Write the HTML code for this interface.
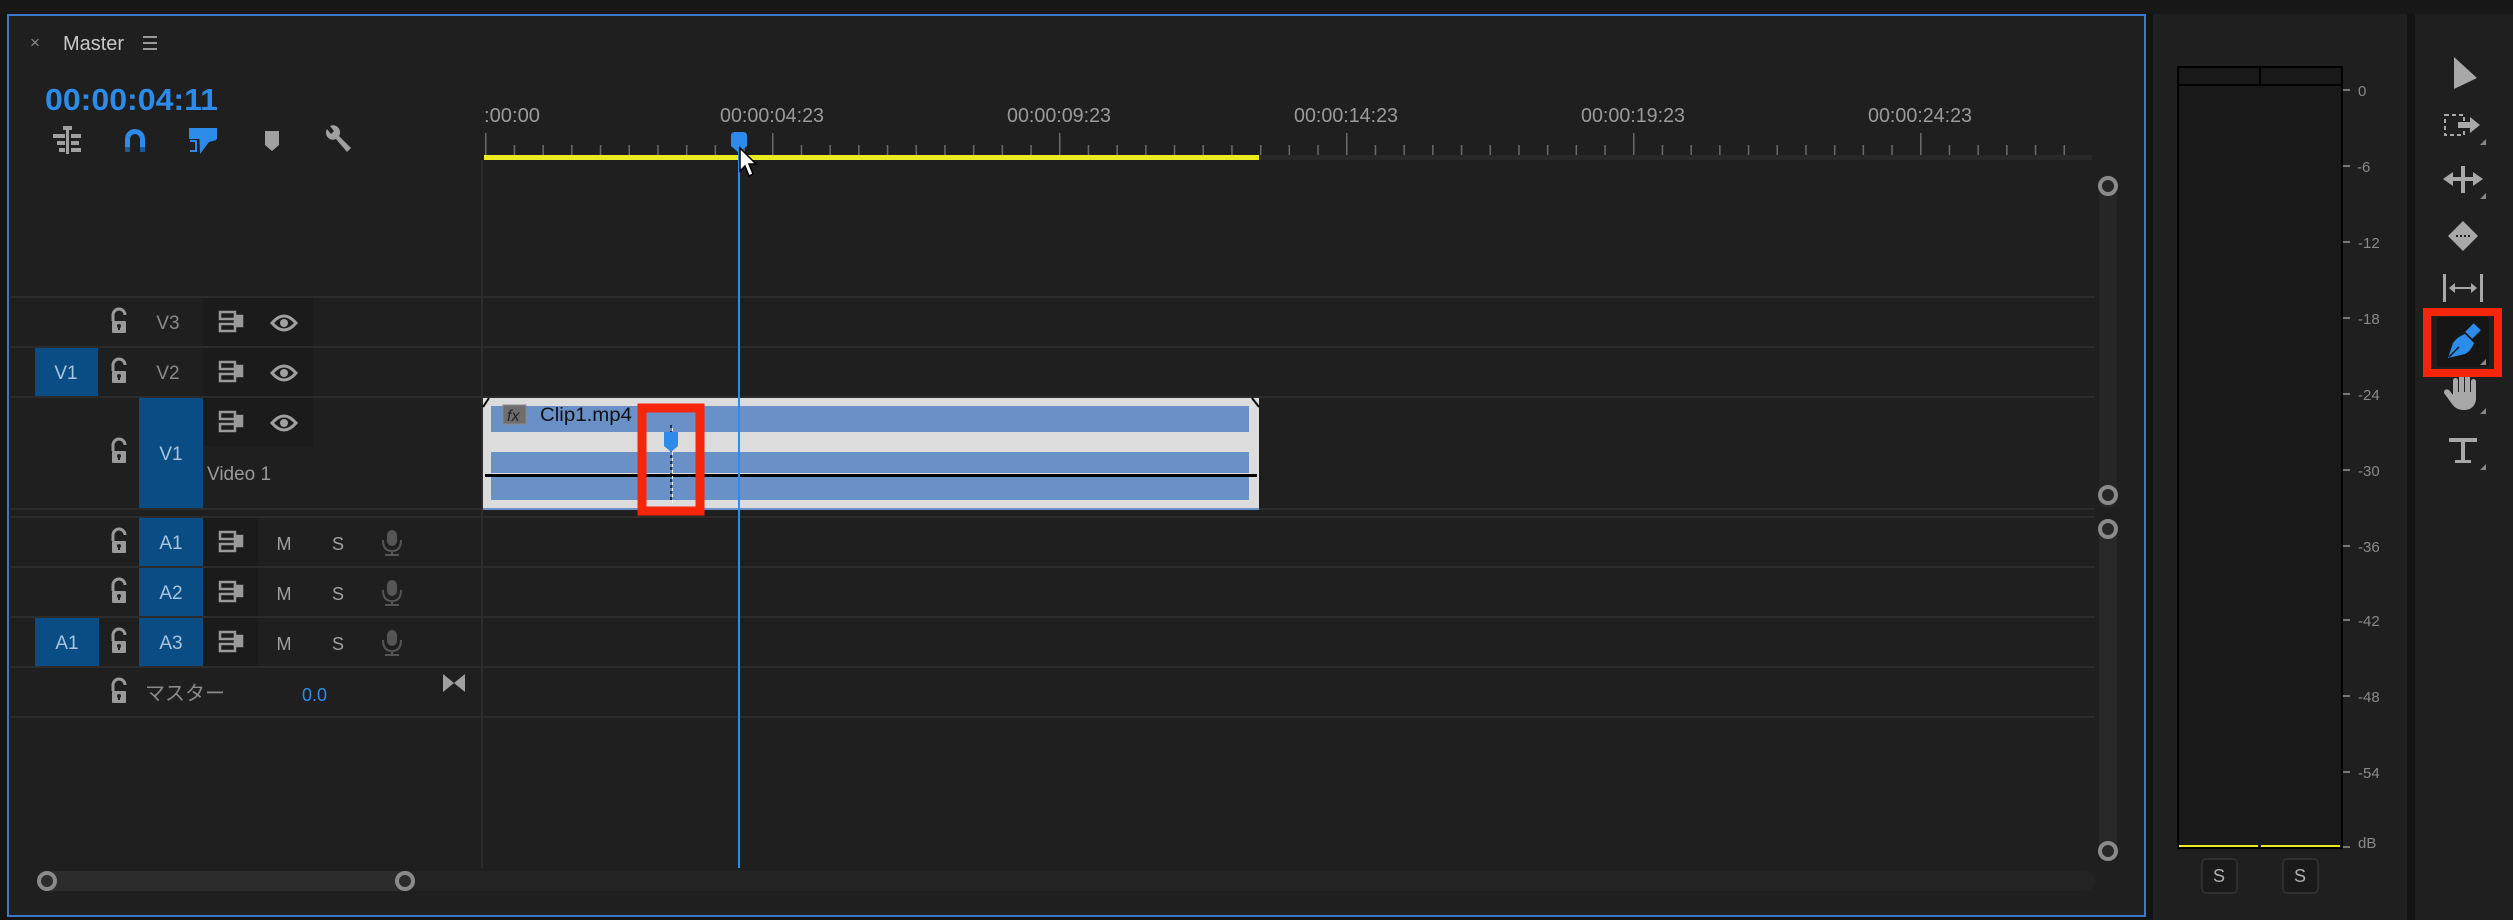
<!DOCTYPE html>
<html><head><meta charset="utf-8"><style>
html,body{margin:0;padding:0;background:#141414;width:2513px;height:920px;overflow:hidden}
svg{display:block}
text{font-family:"Liberation Sans","Noto Sans CJK JP",sans-serif}
</style></head><body>
<svg width="2513" height="920" viewBox="0 0 2513 920" xmlns="http://www.w3.org/2000/svg">
<defs>
<pattern id="ticks" x="485" y="0" width="28.7" height="920" patternUnits="userSpaceOnUse">
<rect x="0" y="145" width="1.5" height="10" fill="#6a6a6a"/>
</pattern>
<g id="lock"><path d="M-6 -2 V-8 A6 6 0 0 1 6 -8" fill="none" stroke="#9a9a9a" stroke-width="3"/><rect x="-7" y="-2" width="14" height="12" rx="1" fill="#9a9a9a"/><circle cx="0" cy="3" r="2" fill="#222"/><rect x="-1" y="3" width="2" height="4" fill="#222"/></g>
<g id="tog" fill="none" stroke="#9a9a9a" stroke-width="2.5"><rect x="-11" y="-10" width="15" height="7"/><rect x="-11" y="2" width="15" height="7"/><rect x="4" y="-6" width="7" height="10" fill="#9a9a9a"/></g>
<g id="eye"><path d="M-12 0 Q0 -14 12 0 Q0 14 -12 0Z" fill="none" stroke="#a0a0a0" stroke-width="3"/><circle cx="0" cy="0" r="4" fill="#a0a0a0"/></g>
<g id="mic" fill="#555"><rect x="-5" y="-12" width="10" height="16" rx="5"/><path d="M-9 -2 Q-9 9 0 9 Q9 9 9 -2" fill="none" stroke="#555" stroke-width="2"/><rect x="-1" y="9" width="2" height="4"/><rect x="-7" y="12" width="14" height="2"/></g>
</defs>

<rect x="0" y="0" width="2513" height="14" fill="#171717"/>
<rect x="8" y="15" width="2137" height="901" fill="#1f1f1f" stroke="#3d78c8" stroke-width="2"/>

<text x="30" y="48" font-size="17" fill="#8a8a8a">×</text>
<text x="63" y="50" font-size="20" fill="#c8c8c8" textLength="61" lengthAdjust="spacingAndGlyphs">Master</text>
<g fill="#9a9a9a"><rect x="143" y="36" width="14" height="2"/><rect x="143" y="42" width="14" height="2"/><rect x="143" y="48" width="14" height="2"/></g>
<text x="45" y="110" font-size="31" font-weight="bold" fill="#2d8ceb" textLength="173" lengthAdjust="spacingAndGlyphs">00:00:04:11</text>

<g fill="#a0a0a0">
<rect x="66" y="126" width="3" height="28"/><rect x="63" y="126" width="9" height="4"/>
<rect x="53" y="134" width="12" height="4"/><rect x="71" y="134" width="10" height="4"/>
<rect x="57" y="141" width="8" height="4"/><rect x="71" y="141" width="8" height="4"/>
<rect x="59" y="148" width="6" height="4"/><rect x="71" y="148" width="10" height="4"/>
</g>
<path d="M125 152 V139 A10 10 0 0 1 145 139 V152 H140 V139 A5 5 0 0 0 130 139 V152Z" fill="#2d8ceb"/>
<rect x="125" y="147" width="5" height="5" fill="#1a5a9a"/><rect x="140" y="147" width="5" height="5" fill="#1a5a9a"/>
<rect x="189" y="128" width="28" height="11" fill="#2d8ceb"/>
<path d="M199 128 L217 140 L209 142 L200 154Z" fill="#2d8ceb"/>
<path d="M190 141 H196 V151 H190" fill="none" stroke="#2d8ceb" stroke-width="2"/>
<path d="M265 131 H279 V145 L272 151 L265 145Z" fill="#a0a0a0"/>
<path d="M327 129 A7 7 0 0 0 336 139 L347 152 L351 148 L339 136 A7 7 0 0 0 330 126 L334 131 L331 134Z" fill="#a0a0a0"/>

<text x="484" y="122" font-size="20" fill="#9a9a9a" textLength="56" lengthAdjust="spacingAndGlyphs">:00:00</text>
<g font-size="20" fill="#9a9a9a" text-anchor="middle">
<text x="772" y="122" textLength="104" lengthAdjust="spacingAndGlyphs">00:00:04:23</text>
<text x="1059" y="122" textLength="104" lengthAdjust="spacingAndGlyphs">00:00:09:23</text>
<text x="1346" y="122" textLength="104" lengthAdjust="spacingAndGlyphs">00:00:14:23</text>
<text x="1633" y="122" textLength="104" lengthAdjust="spacingAndGlyphs">00:00:19:23</text>
<text x="1920" y="122" textLength="104" lengthAdjust="spacingAndGlyphs">00:00:24:23</text>
</g>
<rect x="484" y="140" width="1608" height="16" fill="url(#ticks)"/>
<g fill="#6a6a6a"><rect x="485" y="133" width="1.5" height="22"/><rect x="772" y="133" width="1.5" height="22"/><rect x="1059" y="133" width="1.5" height="22"/><rect x="1346" y="133" width="1.5" height="22"/><rect x="1633" y="133" width="1.5" height="22"/><rect x="1920" y="133" width="1.5" height="22"/></g>
<rect x="484" y="155" width="1608" height="5" fill="#282828"/>
<rect x="484" y="155" width="775" height="5" fill="#eaea1e"/>

<g fill="#2c2c2c">
<rect x="10" y="296" width="2085" height="2"/>
<rect x="10" y="346" width="2085" height="2"/>
<rect x="10" y="396" width="2085" height="2"/>
<rect x="10" y="508" width="2085" height="2"/>
<rect x="10" y="516" width="2085" height="2"/>
<rect x="10" y="566" width="2085" height="2"/>
<rect x="10" y="616" width="2085" height="2"/>
<rect x="10" y="666" width="2085" height="2"/>
<rect x="10" y="716" width="2085" height="2"/>
<rect x="481" y="160" width="2" height="708"/>
</g>
<g fill="#1b1b1b">
<rect x="203" y="298" width="110" height="48"/><rect x="203" y="348" width="110" height="48"/><rect x="203" y="398" width="110" height="48"/>
<rect x="203" y="518" width="55" height="48"/><rect x="203" y="568" width="55" height="48"/><rect x="203" y="618" width="55" height="48"/>
</g>

<g fill="#0a4d84">
<rect x="35" y="348" width="63" height="48"/>
<rect x="139" y="398" width="64" height="110"/>
<rect x="139" y="518" width="64" height="48"/>
<rect x="139" y="568" width="64" height="48"/>
<rect x="139" y="618" width="64" height="48"/>
<rect x="35" y="618" width="64" height="48"/>
</g>
<g font-size="19" fill="#a8c4e0" text-anchor="middle">
<text x="66" y="379">V1</text><text x="171" y="460">V1</text>
<text x="171" y="549">A1</text><text x="171" y="599">A2</text><text x="171" y="649">A3</text>
<text x="67" y="649">A1</text>
</g>
<g font-size="19" fill="#8a8a8a" text-anchor="middle"><text x="168" y="329">V3</text><text x="168" y="379">V2</text></g>
<text x="207" y="480" font-size="19" fill="#9a9a9a">Video 1</text>
<use href="#lock" x="119" y="323"/><use href="#lock" x="119" y="373"/><use href="#lock" x="119" y="453"/>
<use href="#lock" x="119" y="543"/><use href="#lock" x="119" y="593"/><use href="#lock" x="119" y="643"/><use href="#lock" x="119" y="693"/>
<use href="#tog" x="231" y="322"/><use href="#tog" x="231" y="372"/><use href="#tog" x="231" y="422"/>
<use href="#tog" x="231" y="542"/><use href="#tog" x="231" y="592"/><use href="#tog" x="231" y="642"/>
<use href="#eye" x="284" y="323"/><use href="#eye" x="284" y="373"/><use href="#eye" x="284" y="423"/>
<g font-size="18" fill="#a0a0a0" text-anchor="middle">
<text x="284" y="550">M</text><text x="338" y="550">S</text>
<text x="284" y="600">M</text><text x="338" y="600">S</text>
<text x="284" y="650">M</text><text x="338" y="650">S</text>
</g>
<use href="#mic" x="392" y="542"/><use href="#mic" x="392" y="592"/><use href="#mic" x="392" y="642"/>
<text x="145" y="700" font-size="20" fill="#8a8a8a">マスター</text>
<text x="302" y="701" font-size="18" fill="#2d8ceb">0.0</text>
<path d="M443 674 L454 683 L465 674 V692 L454 683 L443 692Z" fill="#a0a0a0"/>

<rect x="483" y="398" width="776" height="111" fill="#dcdcdc"/>
<rect x="483" y="508" width="776" height="2" fill="#6a90c8"/>
<rect x="491" y="406" width="758" height="26" fill="#6a90c8"/>
<rect x="491" y="452" width="758" height="21" fill="#6a90c8"/>
<rect x="491" y="477" width="758" height="23" fill="#6a90c8"/>
<rect x="485" y="474" width="772" height="3" fill="#000"/>
<path d="M483 407 L489 398" stroke="#000" stroke-width="2"/><path d="M1259 407 L1252 398" stroke="#000" stroke-width="2"/>
<rect x="503" y="405" width="23" height="19" fill="#6e6e6e" stroke="#888" stroke-width="1"/>
<text x="507" y="421" font-size="16" font-style="italic" fill="#222">fx</text>
<text x="540" y="421" font-size="19" fill="#111" textLength="92" lengthAdjust="spacingAndGlyphs">Clip1.mp4</text>
<line x1="671" y1="425" x2="671" y2="503" stroke="#111" stroke-width="1.5" stroke-dasharray="3 3"/>
<line x1="672.5" y1="425" x2="672.5" y2="503" stroke="#fff" stroke-width="1" stroke-dasharray="3 3" stroke-dashoffset="3"/>
<path d="M664 432 H678 V446 L671 452 L664 446Z" fill="#2d8ceb"/>
<rect x="642" y="408" width="58" height="103" fill="none" stroke="#f5260a" stroke-width="9"/>

<rect x="738" y="150" width="2" height="718" fill="#2d8ceb"/>
<path d="M731 136 Q731 132 735 132 H743 Q747 132 747 136 V146 L739 153 L731 146Z" fill="#2d8ceb"/>
<path d="M740 148 V171 L745 166 L749 176 L753 174 L749 164 L756 164Z" fill="#fff" stroke="#000" stroke-width="1.5"/>

<rect x="2099" y="175" width="18" height="333" rx="9" fill="#262626"/>
<circle cx="2108" cy="186" r="8" fill="none" stroke="#8a8a8a" stroke-width="4"/>
<circle cx="2108" cy="495" r="8" fill="none" stroke="#8a8a8a" stroke-width="4"/>
<rect x="2099" y="520" width="18" height="340" rx="9" fill="#282828"/>
<circle cx="2108" cy="529" r="8" fill="none" stroke="#8a8a8a" stroke-width="4"/>
<circle cx="2108" cy="851" r="8" fill="none" stroke="#8a8a8a" stroke-width="4"/>
<rect x="37" y="871" width="2058" height="20" rx="10" fill="#232323"/>
<rect x="37" y="871" width="378" height="20" rx="10" fill="#2c2c2c"/>
<circle cx="47" cy="881" r="8" fill="none" stroke="#8a8a8a" stroke-width="4"/>
<circle cx="405" cy="881" r="8" fill="none" stroke="#8a8a8a" stroke-width="4"/>

<rect x="2153" y="14" width="254" height="906" fill="#1f1f1f"/>
<rect x="2178" y="67" width="164" height="781" fill="#191919" stroke="#000" stroke-width="2"/>
<line x1="2178" y1="85" x2="2342" y2="85" stroke="#000" stroke-width="2"/>
<line x1="2260" y1="67" x2="2260" y2="85" stroke="#000" stroke-width="2"/>
<rect x="2179" y="845" width="79" height="2" fill="#eaea1e"/><rect x="2261" y="845" width="79" height="2" fill="#eaea1e"/>
<g fill="#777">
<rect x="2343" y="89" width="7" height="2"/><rect x="2343" y="165" width="7" height="2"/><rect x="2343" y="241" width="7" height="2"/><rect x="2343" y="317" width="7" height="2"/><rect x="2343" y="393" width="7" height="2"/><rect x="2343" y="469" width="7" height="2"/><rect x="2343" y="545" width="7" height="2"/><rect x="2343" y="619" width="7" height="2"/><rect x="2343" y="695" width="7" height="2"/><rect x="2343" y="771" width="7" height="2"/><rect x="2343" y="846" width="7" height="2"/>
</g>
<g font-size="15" fill="#8a8a8a">
<text x="2358" y="96">0</text><text x="2357" y="172">-6</text><text x="2358" y="248">-12</text><text x="2358" y="324">-18</text><text x="2358" y="400">-24</text><text x="2358" y="476">-30</text><text x="2358" y="552">-36</text><text x="2358" y="626">-42</text><text x="2358" y="702">-48</text><text x="2358" y="778">-54</text><text x="2358" y="848">dB</text>
</g>
<rect x="2202" y="859" width="35" height="34" rx="4" fill="#1a1a1a" stroke="#2e2e2e" stroke-width="2"/>
<rect x="2283" y="859" width="35" height="34" rx="4" fill="#1a1a1a" stroke="#2e2e2e" stroke-width="2"/>
<g font-size="18" fill="#b0b0b0" text-anchor="middle"><text x="2219" y="882">S</text><text x="2300" y="882">S</text></g>

<rect x="2415" y="14" width="98" height="906" fill="#1f1f1f"/>
<g fill="#a8a8a8">
<path d="M2454 57 L2477 78 L2454 89Z"/>
<rect x="2445" y="115" width="19" height="20" fill="none" stroke="#a8a8a8" stroke-width="2" stroke-dasharray="4 3"/>
<path d="M2458 122 H2470 V117 L2480 125 L2470 133 V128 H2458Z"/>
<path d="M2443 179 L2453 172 V186Z M2483 179 L2473 172 V186Z"/><rect x="2461" y="166" width="4" height="27"/><rect x="2450" y="177" width="26" height="4"/>
<path d="M2448 236 L2463 221 L2478 236 L2463 251Z"/>
<rect x="2443" y="274" width="3" height="28"/><rect x="2480" y="274" width="3" height="28"/>
<path d="M2449 288 L2455 283 V293Z M2477 288 L2471 283 V293Z"/><rect x="2453" y="287" width="20" height="2"/>
<rect x="2453" y="378" width="5" height="20" rx="2.5"/>
<rect x="2459" y="373" width="5" height="24" rx="2.5"/>
<rect x="2465" y="374" width="5" height="23" rx="2.5"/>
<rect x="2471" y="379" width="5" height="19" rx="2.5"/>
<path d="M2453 392 H2476 V400 Q2474 410 2464 410 Q2456 410 2452 404 L2444 393 Q2444 388 2449 390 L2453 395Z"/>
<rect x="2449" y="438" width="28" height="4"/><rect x="2461" y="438" width="4" height="24"/><rect x="2455" y="460" width="16" height="3"/>
</g>
<path d="M2456 236 L2470 236" stroke="#1f1f1f" stroke-width="2" stroke-dasharray="2 2"/>
<g fill="#888"><path d="M2486 145 L2486 139 L2480 145Z"/><path d="M2486 199 L2486 193 L2480 199Z"/><path d="M2486 414 L2486 408 L2480 414Z"/><path d="M2486 470 L2486 464 L2480 470Z"/></g>
<rect x="2427" y="312" width="71" height="61" fill="none" stroke="#f5260a" stroke-width="8"/>
<rect x="2437" y="317" width="52" height="50" rx="3" fill="#161616"/>
<path d="M2448 358 L2453 343 Q2457 337 2465 334 L2474 343 Q2471 351 2465 354Z" fill="#2d8ceb"/>
<line x1="2449" y1="357" x2="2459" y2="347" stroke="#161616" stroke-width="1.5"/>
<rect x="2468" y="325" width="10" height="12" transform="rotate(45 2473 331)" fill="#2d8ceb"/>
<path d="M2486 365 L2486 359 L2480 365Z" fill="#888"/>
</svg>
</body></html>
